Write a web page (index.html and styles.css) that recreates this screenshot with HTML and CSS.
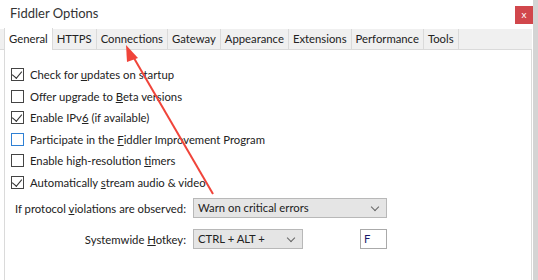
FILE: index.html
```html
<!DOCTYPE html>
<html lang="en">
<head>
    <meta charset="UTF-8">
    <title>Fiddler Options</title>
    <link rel="stylesheet" href="styles.css">
</head>
<body>

<div class="window">
    <div class="titlebar">
        <span class="title">Fiddler Options</span>
        <span class="close">x</span>
    </div>

    <div class="tabs">
        <div class="tab active">General</div>
        <div class="tab">HTTPS</div>
        <div class="tab">Connections</div>
        <div class="tab">Gateway</div>
        <div class="tab">Appearance</div>
        <div class="tab">Extensions</div>
        <div class="tab">Performance</div>
        <div class="tab">Tools</div>
    </div>

    <div class="panel">
        <div class="checks">
            <label class="check"><span class="box checked"></span><span>Check for <u>u</u>pdates on startup</span></label>
            <label class="check"><span class="box"></span><span>Offer upgrade to <u>B</u>eta versions</span></label>
            <label class="check"><span class="box checked"></span><span>Enable IPv<u>6</u> (if available)</span></label>
            <label class="check"><span class="box focus"></span><span>Participate in the <u>F</u>iddler Improvement Program</span></label>
            <label class="check"><span class="box"></span><span>Enable high-resolution <u>t</u>imers</span></label>
            <label class="check"><span class="box checked"></span><span>Automatically <u>s</u>tream audio &amp; video</span></label>
        </div>

        <div class="form-row">
            <span class="form-label">If protocol <u>v</u>iolations are observed:</span>
            <div class="select wide">Warn on critical errors<span class="chev"></span></div>
        </div>
        <div class="form-row">
            <span class="form-label">Systemwide <u>H</u>otkey:</span>
            <div class="select narrow">CTRL + ALT +<span class="chev"></span></div>
            <div class="keybox">F</div>
        </div>
    </div>

    <svg class="arrow" width="538" height="280" viewBox="0 0 538 280">
        <line x1="213" y1="194" x2="131" y2="53" stroke="#f0443a" stroke-width="2"/>
        <polygon points="126,45 138,58 127,62" fill="#f0443a"/>
    </svg>
</div>

</body>
</html>
```

FILE: styles.css
```css
body {
    margin: 0;
    font-family: Lato, "Noto Sans", sans-serif;
    font-size: 11.3px;
    color: #222;
    background: #fff;
}
.window {
    position: relative;
    width: 538px;
    height: 280px;
    background: #fff;
    overflow: hidden;
}
.window::after {
    content: "";
    position: absolute;
    top: 0;
    right: 0;
    width: 5px;
    height: 280px;
    background: #d4d4d4;
}
.titlebar {
    height: 29px;
    display: flex;
    align-items: center;
    justify-content: space-between;
    padding: 0 5px 0 10px;
}
.title {
    font-size: 13px;
    color: #333;
    margin-top: -3px;
}
.close {
    width: 18px;
    height: 18px;
    background: #d1474c;
    color: #fff;
    font-size: 10px;
    line-height: 16px;
    text-align: center;
    margin-top: 1px;
}
.tabs {
    display: flex;
    height: 20px;
    margin-right: 6px;
    background: #f0f0f0;
    padding-left: 4px;
    border-bottom: 1px solid #dadada;
}
.tab {
    padding: 0 4px;
    line-height: 20px;
    border-right: 1px solid #dadada;
    color: #222;
}
.tab.active {
    background: #fff;
    margin-top: -1px;
    line-height: 22px;
    height: 22px;
    padding: 0 4px;
    border-left: 1px solid #dadada;
    border-right: 1px solid #dadada;
}
.panel {
    margin: 0 6px 0 4px;
    height: 230px;
    border-left: 1px solid #dadada;
    border-right: 1px solid #dadada;
    padding: 18px 0 0 6px;
}
.checks {
    display: flex;
    flex-direction: column;
    gap: 8px;
}
.check {
    display: flex;
    align-items: center;
    height: 13.5px;
    gap: 6px;
    white-space: nowrap;
}
.box {
    width: 11px;
    height: 11px;
    border: 1px solid #444;
    background: #fff;
    position: relative;
}
.box.focus {
    border-color: #2f80d4;
}
.box.checked::after {
    content: "";
    position: absolute;
    left: 2px;
    top: 0;
    width: 5px;
    height: 8px;
    border-right: 1px solid #333;
    border-bottom: 1px solid #333;
    transform: rotate(40deg);
}
.form-row {
    display: flex;
    align-items: center;
    margin-top: 9px;
}
.form-row + .form-row {
    margin-top: 11px;
}
.form-label {
    width: 175px;
    margin-right: 7px;
    text-align: right;
    white-space: nowrap;
}
.select {
    position: relative;
    height: 18px;
    line-height: 18px;
    background: #e5e5e5;
    border: 1px solid #b8b8b8;
    padding-left: 4px;
}
.select.wide {
    width: 188px;
}
.select.narrow {
    width: 104px;
    margin-right: 57px;
}
.chev {
    position: absolute;
    right: 8px;
    top: 5px;
    width: 5px;
    height: 5px;
    border-right: 1px solid #666;
    border-bottom: 1px solid #666;
    transform: rotate(45deg);
}
.keybox {
    width: 22px;
    height: 18px;
    line-height: 18px;
    border: 1px solid #aaa;
    padding-left: 3px;
    color: #1a1a6a;
}
.arrow {
    position: absolute;
    left: 0;
    top: 0;
    pointer-events: none;
}
```
